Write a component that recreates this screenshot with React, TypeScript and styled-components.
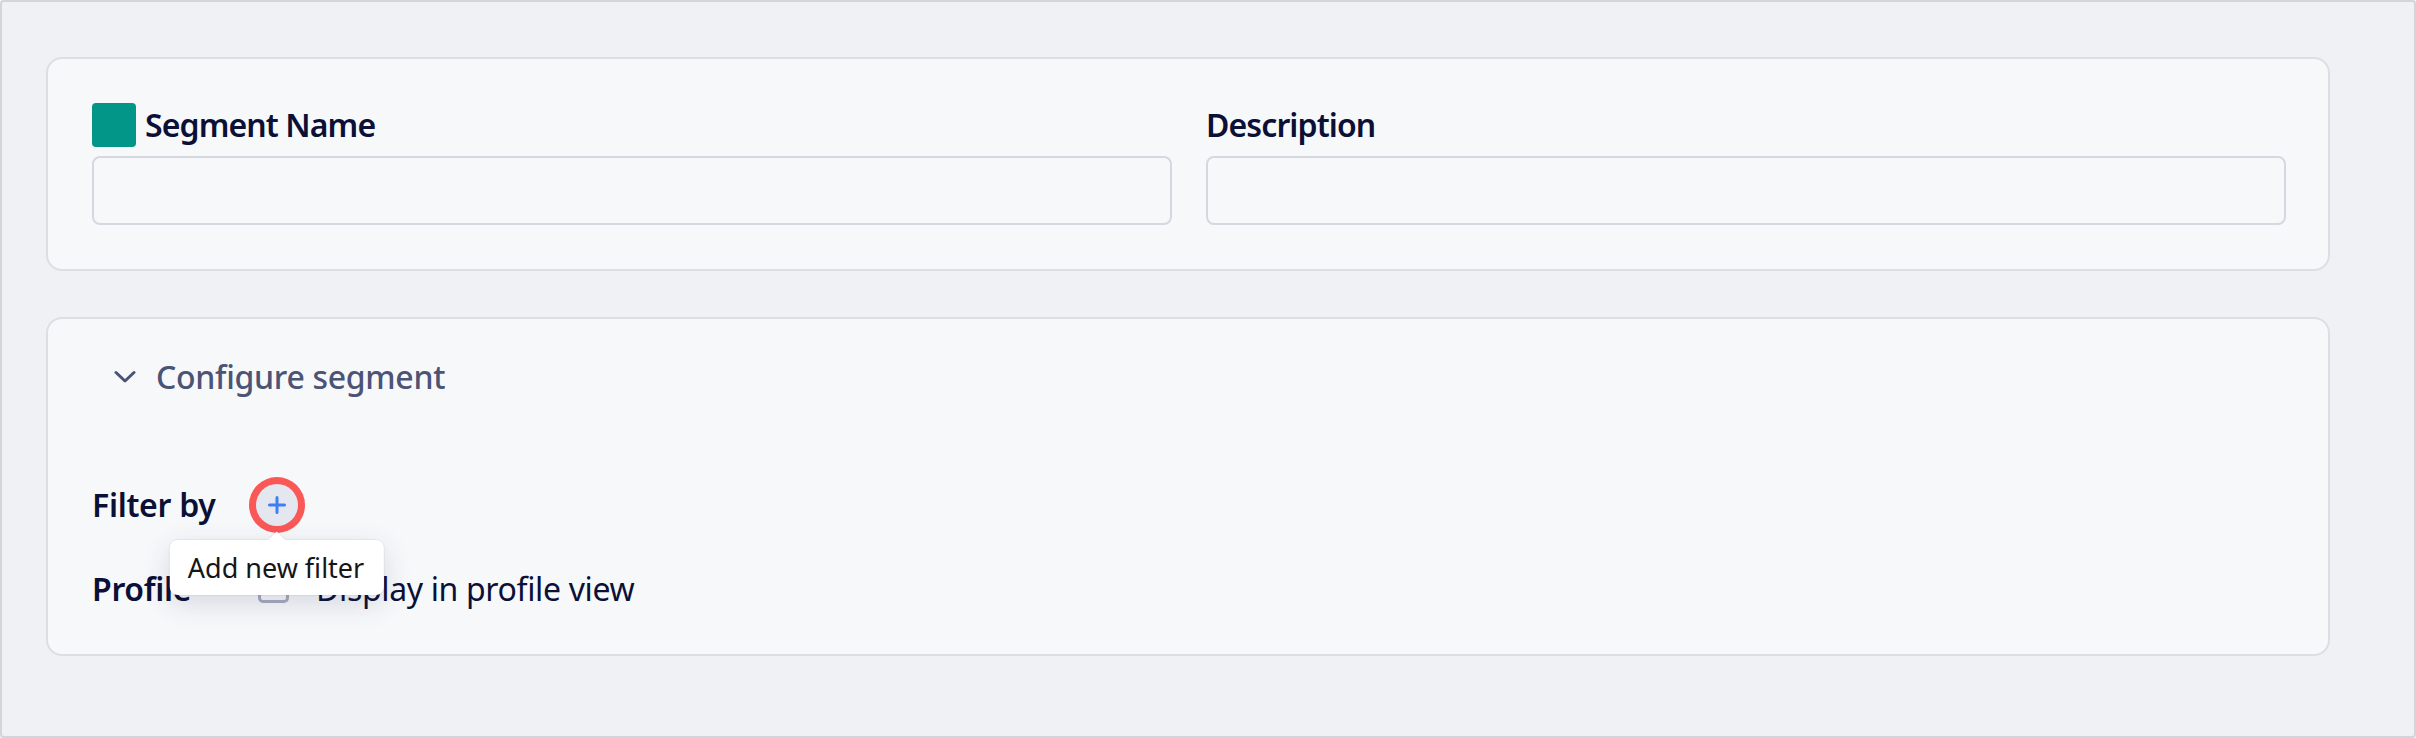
import React from "react";
import styled, { createGlobalStyle } from "styled-components";

const GlobalStyle = createGlobalStyle`
  html, body {
    margin: 0;
    padding: 0;
    background: #f0f1f5;
  }
  * { box-sizing: border-box; }
  body {
    font-family: "Noto Sans", "Open Sans", sans-serif;
  }
`;

const Frame = styled.div`
  width: 2416px;
  height: 738px;
  border: 2px solid #d3d5dc;
  border-radius: 4px;
  background: #f0f1f5;
  padding: 55px 84px 0 44px;
  display: flex;
  flex-direction: column;
  gap: 46px;
`;

const Card = styled.section<{ $pad: string }>`
  background: #f7f8fa;
  border: 2px solid #dcdee4;
  border-radius: 16px;
  padding: ${(p) => p.$pad};
`;

const FieldsGrid = styled.div`
  display: grid;
  grid-template-columns: 1fr 1fr;
  column-gap: 34px;
`;

const Field = styled.div`
  display: flex;
  flex-direction: column;
  gap: 9px;
`;

const Label = styled.label`
  display: flex;
  align-items: center;
  gap: 9px;
  height: 44px;
  font-size: 32px;
  font-weight: 600;
  letter-spacing: -0.9px;
  line-height: 44px;
  color: #0b1036;
`;

const ColorSwatch = styled.span`
  width: 44px;
  height: 44px;
  border-radius: 4px;
  background: #029688;
  flex: none;
`;

const Input = styled.input`
  height: 69px;
  width: 100%;
  border: 2px solid #d6d8df;
  border-radius: 8px;
  background: #f7f8fa;
  outline: none;
  font: inherit;
  font-size: 28px;
  padding: 0 16px;
`;

const Header = styled.button`
  display: flex;
  align-items: center;
  gap: 20px;
  height: 44px;
  padding: 0 0 0 22px;
  border: none;
  background: transparent;
  font-family: "Noto Sans", "Open Sans", sans-serif;
  font-size: 32px;
  font-weight: 500;
  letter-spacing: -0.3px;
  line-height: 44px;
  color: #4b5376;
  cursor: pointer;
`;

const Body = styled.div`
  margin-top: 85px;
  display: flex;
  flex-direction: column;
  gap: 42px;
`;

const Row = styled.div`
  display: grid;
  grid-template-columns: 164px auto;
  align-items: center;
  height: 42px;
`;

const RowLabel = styled.span`
  font-size: 32px;
  font-weight: 600;
  letter-spacing: -0.3px;
  line-height: 42px;
  color: #0b1036;
`;

const Control = styled.div`
  display: flex;
  align-items: center;
`;

const AddWrap = styled.div`
  position: relative;
  width: 42px;
  height: 42px;
`;

const AddButton = styled.button`
  width: 42px;
  height: 42px;
  border-radius: 50%;
  border: none;
  padding: 0;
  background: #e4e7ef;
  box-shadow: 0 0 0 7px #fa5757;
  display: flex;
  align-items: center;
  justify-content: center;
  cursor: pointer;
`;

const Tooltip = styled.div`
  position: absolute;
  top: calc(100% + 14px);
  left: 50%;
  transform: translateX(-50%);
  z-index: 5;
  white-space: nowrap;
  background: #ffffff;
  border-radius: 8px;
  padding: 0 20px 0 18px;
  height: 55px;
  display: flex;
  align-items: center;
  font-size: 27px;
  font-weight: 400;
  color: #161616;
  box-shadow: 0 8px 28px rgba(40, 48, 90, 0.16), 0 0 0 1px rgba(20, 30, 60, 0.05);

  &::before {
    content: "";
    position: absolute;
    top: -6px;
    left: 50%;
    width: 12px;
    height: 12px;
    background: #ffffff;
    transform: translateX(-50%) rotate(45deg);
    box-shadow: -1px -1px 0 rgba(20, 30, 60, 0.05);
  }
`;

const Checkbox = styled.span`
  width: 31px;
  height: 28px;
  margin-left: 2px;
  border: 3px solid #a7abbf;
  border-radius: 5px;
  background: #f7f8fa;
  flex: none;
`;

const CheckText = styled.span`
  margin-left: 27px;
  font-size: 32px;
  font-weight: 400;
  letter-spacing: -0.35px;
  line-height: 42px;
  color: #0b1036;
`;

const Chevron = () => (
  <svg width="22" height="14" viewBox="0 0 22 14" fill="none">
    <path d="M2 2.5 L11 11 L20 2.5" stroke="#4b5376" strokeWidth="3" strokeLinecap="round" strokeLinejoin="round" />
  </svg>
);

const Plus = () => (
  <svg width="18" height="18" viewBox="0 0 18 18" fill="none">
    <path d="M9 1.5 V16.5 M1.5 9 H16.5" stroke="#3f7ff5" strokeWidth="3" strokeLinecap="round" />
  </svg>
);

export default function App() {
  return (
    <>
      <GlobalStyle />
      <Frame>
        <Card $pad="44px 42px 44px 44px">
          <FieldsGrid>
            <Field>
              <Label>
                <ColorSwatch />
                Segment Name
              </Label>
              <Input />
            </Field>
            <Field>
              <Label>Description</Label>
              <Input />
            </Field>
          </FieldsGrid>
        </Card>
        <Card $pad="36px 42px 44px 44px">
          <Header>
            <Chevron />
            Configure segment
          </Header>
          <Body>
            <Row>
              <RowLabel>Filter by</RowLabel>
              <Control>
                <AddWrap>
                  <AddButton aria-label="Add new filter">
                    <Plus />
                  </AddButton>
                  <Tooltip>Add new filter</Tooltip>
                </AddWrap>
              </Control>
            </Row>
            <Row>
              <RowLabel>Profile</RowLabel>
              <Control>
                <Checkbox />
                <CheckText>Display in profile view</CheckText>
              </Control>
            </Row>
          </Body>
        </Card>
      </Frame>
    </>
  );
}
